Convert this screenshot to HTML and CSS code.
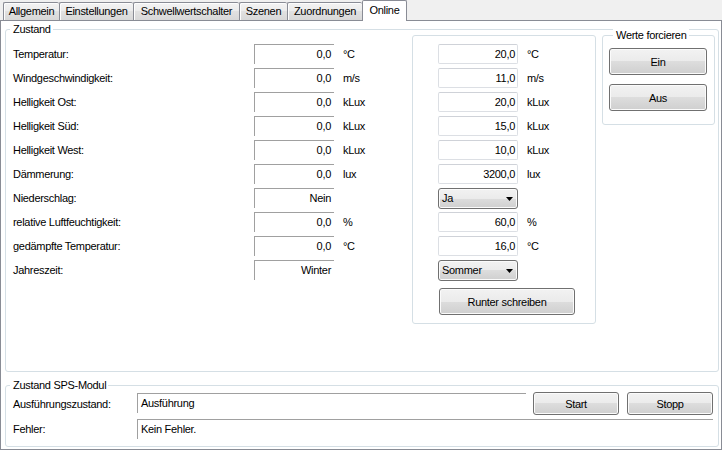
FILE: index.html
```html
<!DOCTYPE html>
<html lang="de">
<head>
<meta charset="utf-8">
<title>Online</title>
<link rel="stylesheet" href="styles.css">
</head>
<body>
<div class="window">
  <div class="tabs">
    <div class="tab tab-allgemein">Allgemein</div>
    <div class="tab tab-einstellungen">Einstellungen</div>
    <div class="tab tab-schwell">Schwellwertschalter</div>
    <div class="tab tab-szenen">Szenen</div>
    <div class="tab tab-zuordnungen">Zuordnungen</div>
    <div class="tab tab-active">Online</div>
  </div>
  <div class="page">
    <section class="group group-zustand">
      <div class="caption">Zustand</div>
      <div class="zustand-body">
        <div class="readings">
          <div class="lbl">Temperatur:</div><div class="ro num">0,0</div><div class="unit">°C</div>
          <div class="lbl">Windgeschwindigkeit:</div><div class="ro num">0,0</div><div class="unit">m/s</div>
          <div class="lbl">Helligkeit Ost:</div><div class="ro num">0,0</div><div class="unit">kLux</div>
          <div class="lbl">Helligkeit Süd:</div><div class="ro num">0,0</div><div class="unit">kLux</div>
          <div class="lbl">Helligkeit West:</div><div class="ro num">0,0</div><div class="unit">kLux</div>
          <div class="lbl">Dämmerung:</div><div class="ro num">0,0</div><div class="unit">lux</div>
          <div class="lbl">Niederschlag:</div><div class="ro num">Nein</div><div class="unit"></div>
          <div class="lbl">relative Luftfeuchtigkeit:</div><div class="ro num">0,0</div><div class="unit">%</div>
          <div class="lbl">gedämpfte Temperatur:</div><div class="ro num">0,0</div><div class="unit">°C</div>
          <div class="lbl">Jahreszeit:</div><div class="ro num">Winter</div><div class="unit"></div>
        </div>
        <div class="setpoints">
          <div class="sp-grid">
            <div class="tb">20,0</div><div class="unit">°C</div>
            <div class="tb">11,0</div><div class="unit">m/s</div>
            <div class="tb">20,0</div><div class="unit">kLux</div>
            <div class="tb">15,0</div><div class="unit">kLux</div>
            <div class="tb">10,0</div><div class="unit">kLux</div>
            <div class="tb">3200,0</div><div class="unit">lux</div>
            <div class="combo"><span>Ja</span><svg class="arrow" width="7" height="4" viewBox="0 0 7 4"><polygon points="0,0 7,0 3.5,4" fill="#000"/></svg></div><div class="unit"></div>
            <div class="tb">60,0</div><div class="unit">%</div>
            <div class="tb">16,0</div><div class="unit">°C</div>
            <div class="combo"><span>Sommer</span><svg class="arrow" width="7" height="4" viewBox="0 0 7 4"><polygon points="0,0 7,0 3.5,4" fill="#000"/></svg></div><div class="unit"></div>
          </div>
          <button class="btn btn-write">Runter schreiben</button>
        </div>
        <section class="group group-force">
          <div class="caption">Werte forcieren</div>
          <button class="btn btn-force btn-ein">Ein</button>
          <button class="btn btn-force btn-aus">Aus</button>
        </section>
      </div>
    </section>
    <section class="group group-sps">
      <div class="caption">Zustand SPS-Modul</div>
      <div class="sps-row">
        <div class="sps-lbl">Ausführungszustand:</div>
        <div class="ro sps-box">Ausführung</div>
        <button class="btn btn-sps btn-start">Start</button>
        <button class="btn btn-sps btn-stop">Stopp</button>
      </div>
      <div class="sps-row sps-row2">
        <div class="sps-lbl">Fehler:</div>
        <div class="ro sps-box sps-box-wide">Kein Fehler.</div>
      </div>
    </section>
  </div>
</div>
</body>
</html>
```

FILE: styles.css
```css
* {
  box-sizing: border-box;
}

html,
body {
  margin: 0;
  padding: 0;
}

body {
  background: #f0f0f0;
  font-family: "Liberation Sans", Arial, sans-serif;
  font-size: 11px;
  letter-spacing: -0.3px;
  color: #000;
}

.window {
  width: 722px;
  height: 450px;
  display: flex;
  flex-direction: column;
}

/* ---------- tab strip ---------- */
.tabs {
  flex: none;
  display: flex;
  align-items: flex-end;
  height: 21px;
  padding-left: 3px;
  box-shadow: inset 0 -1px 0 #898c95;
}

.tab {
  height: 18px;
  margin-bottom: 1px;
  padding: 2px 0 0;
  line-height: 13px;
  text-align: center;
  white-space: nowrap;
  border: 1px solid #898c95;
  border-right: 0;
  border-bottom: 0;
  border-radius: 2px 2px 0 0;
  background: linear-gradient(#f3f3f3, #ebebeb 50%, #e1e1e1 50%, #d8d8d8);
  box-shadow: inset 1px 1px 0 #fdfdfd;
}

.tab-allgemein { width: 56px; }
.tab-einstellungen { width: 74px; }
.tab-schwell { width: 106px; }
.tab-szenen { width: 48px; }
.tab-zuordnungen { width: 75px; }

.tab-active {
  width: 45px;
  height: 21px;
  margin-bottom: 0;
  padding: 3px 0 0;
  border-right: 1px solid #898c95;
  background: #fff;
  box-shadow: none;
}

/* ---------- tab page ---------- */
.page {
  flex: 1;
  display: flex;
  flex-direction: column;
  background: #fff;
  border: 1px solid #898c95;
  border-top: 0;
}

.group {
  border: 1px solid #d5dfe5;
  border-radius: 3px;
  margin-left: 4px;
  margin-right: 2px;
}

.caption {
  width: fit-content;
  margin: -7px 0 0 4px;
  padding: 0 2px 0 3px;
  line-height: 13px;
  background: #fff;
  white-space: nowrap;
}

.group-zustand {
  flex: 1;
  margin-top: 8px;
}

.zustand-body {
  display: flex;
  align-items: flex-start;
  margin-top: -1px;
  padding-left: 7px;
}

.readings {
  width: 399px;
  padding-top: 9px;
  display: grid;
  grid-template-columns: 241px 80px auto;
  grid-auto-rows: 20px;
  row-gap: 4px;
}

.lbl,
.unit {
  line-height: 20px;
  white-space: nowrap;
}

.unit {
  padding-left: 9px;
}

.ro {
  border-top: 1px solid #a0a0a0;
  border-left: 1px solid #a0a0a0;
  line-height: 18px;
  white-space: nowrap;
}

.num {
  text-align: right;
  padding-right: 3px;
}

/* ---------- set-point group ---------- */
.setpoints {
  width: 184px;
  height: 289px;
  border: 1px solid #d5dfe5;
  border-radius: 3px;
  padding: 8px 0 0 25px;
}

.sp-grid {
  display: grid;
  grid-template-columns: 80px auto;
  grid-auto-rows: 20px;
  row-gap: 4px;
}

.tb {
  border: 1px solid #dcdfe4;
  border-top-color: #cfd2d8;
  border-radius: 2px;
  line-height: 18px;
  text-align: right;
  padding-right: 2px;
  white-space: nowrap;
}

.combo {
  align-self: start;
  height: 21px;
  display: flex;
  align-items: center;
  justify-content: space-between;
  padding: 0 4px 0 3px;
  border: 1px solid #707070;
  border-radius: 3px;
  background: linear-gradient(#f2f2f2, #ebebeb 50%, #dddddd 50%, #cfcfcf);
  box-shadow: inset 0 0 0 1px #fbfbfb;
  line-height: 13px;
}

.arrow {
  display: block;
  margin-top: 1px;
}

/* ---------- buttons ---------- */
.btn {
  display: block;
  margin: 0;
  padding: 0;
  font: inherit;
  letter-spacing: inherit;
  color: #000;
  border: 1px solid #707070;
  border-radius: 3px;
  background: linear-gradient(#f2f2f2, #ebebeb 50%, #dddddd 50%, #cfcfcf);
  box-shadow: inset 0 0 0 1px #fbfbfb;
  text-align: center;
}

.btn-write {
  width: 136px;
  height: 27px;
  margin: 8px 0 0 1px;
}

/* ---------- force group ---------- */
.group-force {
  width: 113px;
  height: 90px;
  margin: 0 0 0 6px;
  padding-left: 6px;
}

.btn-force {
  width: 98px;
  height: 27px;
}

.btn-ein {
  margin-top: 6px;
}

.btn-aus {
  margin-top: 9px;
}

/* ---------- SPS group ---------- */
.group-sps {
  flex: none;
  height: 62px;
  margin-top: 13px;
  margin-bottom: 2px;
}

.sps-row {
  display: flex;
  align-items: flex-start;
  height: 23px;
  padding-left: 7px;
}

.sps-lbl {
  align-self: center;
  width: 124px;
  line-height: 20px;
  white-space: nowrap;
}

.sps-box {
  width: 389px;
  height: 20px;
  margin-top: 1px;
  padding-left: 3px;
}

.btn-sps {
  width: 86px;
  height: 23px;
}

.btn-start {
  margin-left: 7px;
}

.btn-stop {
  margin-left: 8px;
}

.sps-row2 {
  height: 20px;
  margin-top: 4px;
}

.sps-box-wide {
  width: 576px;
  margin-top: 0;
}
```
